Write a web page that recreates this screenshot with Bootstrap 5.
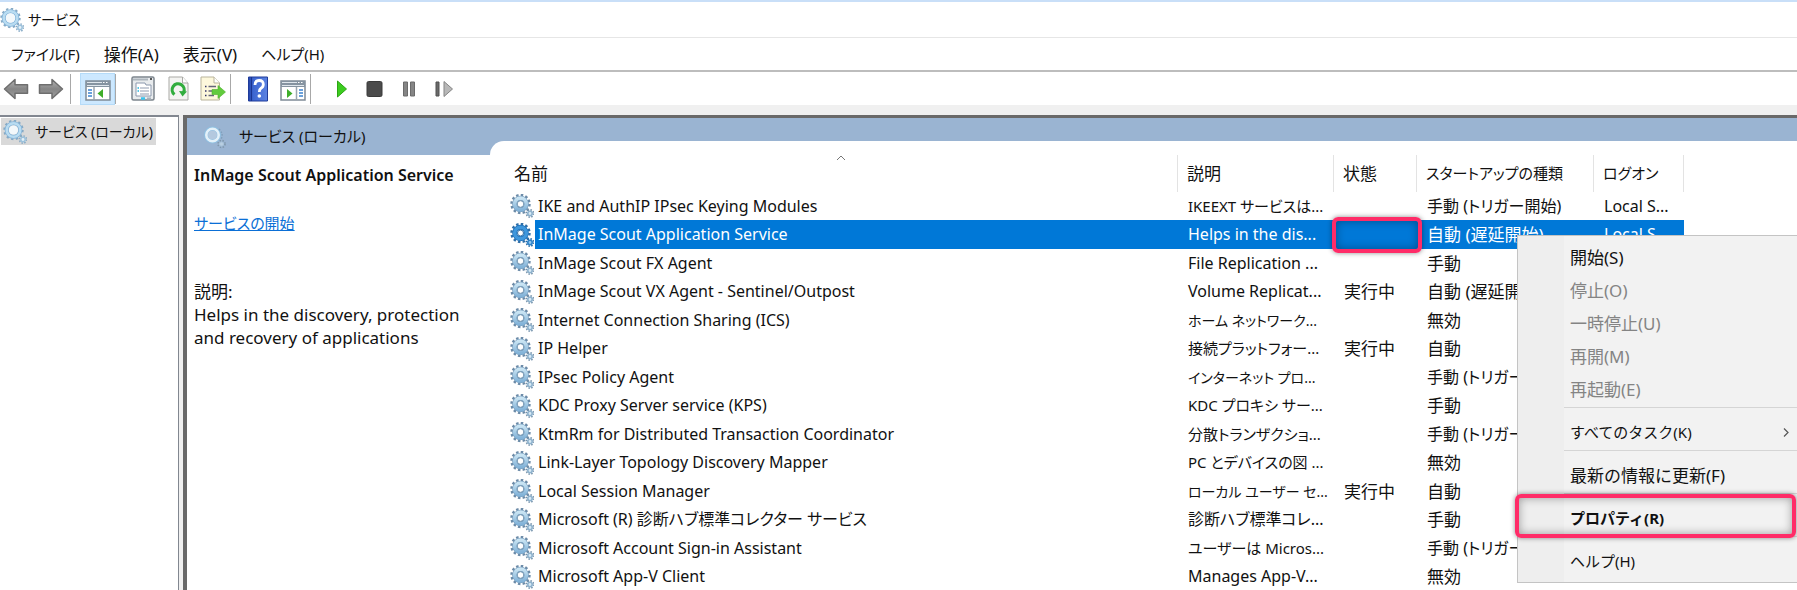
<!DOCTYPE html>
<html lang="ja">
<head>
<meta charset="utf-8">
<meta name="viewport" content="width=device-width, initial-scale=1">
<title>サービス</title>
<link href="https://cdn.jsdelivr.net/npm/bootstrap@5.3.0/dist/css/bootstrap.min.css" rel="stylesheet">
<style>
  body {
    font-family: "Noto Sans", "Noto Sans CJK JP", sans-serif;
    font-size: 16px;
    line-height: 23px;
    color: #111;
    background: #fff;
    font-feature-settings: "palt";
  }
  .ja { font-size: 17px; }
  .kana { font-size: 15px; }
  .kana-sm { font-size: 14px; }
  .titlebar { height: 38px; border-top: 2px solid #c9dff8; border-bottom: 1px solid #e6e6e6; }
  .gear { width: 24px; height: 24px; flex: none; display: block; }
  .menubar { height: 34px; border-bottom: 2px solid #bdbdbd; padding-left: 11px; }
  .menubar a { color: #111; text-decoration: none; }
  .toolbar { height: 33px; }
  .tool { width: 35px; height: 32px; padding: 0; border: 1px solid transparent; background: none; display: flex; align-items: center; justify-content: center; }
  .tool.pressed { background: #cce8ff; border-color: #b5dbf8; }
  .tool svg { width: 30px; height: 28px; display: block; }
  .divider { width: 1px; height: 30px; background: #a8a8a8; margin-right: 9px; }
  .workspace { background: #f0f0f0; padding-top: 10px; min-height: 0; }
  .tree { width: 179px; background: #fff; border-top: 2px solid #828790; border-right: 1px solid #828790; padding: 1px; }
  .tree-node { width: 155px; height: 27px; background: #d9d9d9; color: #111; text-decoration: none; padding-left: 2px; gap: 8px; white-space: nowrap; }
  .console { background: #9ab4d2; border: solid #696969; border-width: 3px 0 0 4px; margin-left: 4px; min-width: 0; }
  .detail { width: 303px; flex: none; }
  .detail-title { height: 37px; padding-left: 15px; gap: 13px; }
  .detail-body { background: #fff; padding: 8px 7px; }
  .detail-body h1 { font-size: 16px; line-height: 24px; font-weight: 600; margin-bottom: 25px; }
  .detail-body .action { margin-bottom: 45px; }
  .detail-body a { color: #0b6fd6; }
  .listing { background: #fff; margin-top: 23px; border-top-left-radius: 14px; padding: 14px 0 0 15px; min-width: 0; overflow: hidden; }
  .services { width: 1179px; table-layout: fixed; border-collapse: separate; border-spacing: 0; }
  .services th { height: 37px; font-weight: 400; padding: 0 0 0 9px; border-right: 1px solid #e3e3e3; position: relative; }
  .services td { height: 28px; padding: 0 0 0 10px; white-space: nowrap; overflow: hidden; line-height: 23px; }
  .services tr:nth-child(even) td { height: 29px; }
  .services td:first-child { padding-left: 5px; }
  .svc { display: flex; align-items: center; gap: 4px; }
  .services .chosen td { background: #0078d7; color: #fff; overflow: visible; position: relative; }
  .services .chosen td:first-child { background: linear-gradient(to right, #fff 30px, #0078d7 30px); }
  .sort { position: absolute; left: 50%; top: 0; width: 10px; height: 6px; margin-left: -5px; }
  .callout { position: absolute; border: 4px solid #ff2c68; border-radius: 6px; pointer-events: none; box-shadow: 0 0 5px rgba(0,0,0,.45), inset 0 0 10px rgba(0,0,0,.35); }
  .callout-status { inset: -3px -5px -4px -2px; z-index: 1; }
  .callout-item { inset: -8px 1px -3px -3px; }
  .context { position: absolute; right: 0; top: 235px; width: 280px; border: 1px solid #c4c4c4; border-right: 0; background: linear-gradient(to right, #eee 46px, #f2f2f2 46px); padding: 5px 0 4px; z-index: 2; }
  .context button { display: block; position: relative; width: 100%; height: 33px; border: 0; background: none; text-align: left; padding: 0 0 0 52px; color: #111; }
  .context button:disabled { color: #848484; }
  .context hr { margin: 1px 0 8px 46px; border: 0; border-top: 1px solid #d5d5d5; opacity: 1; }
  .context .chev { position: absolute; right: 8px; top: 12px; width: 6px; height: 9px; }
</style>
</head>
<body class="vh-100 overflow-hidden d-flex flex-column position-relative">

<svg class="position-absolute" width="0" height="0" aria-hidden="true">
  <defs>
    <linearGradient id="metal" x1="0" y1="0" x2="0" y2="1"><stop offset="0" stop-color="#c9e4f3"/><stop offset="1" stop-color="#83b3d8"/></linearGradient>
    <linearGradient id="arrow" x1="0" y1="0" x2="0" y2="1"><stop offset="0" stop-color="#b4b4b4"/><stop offset=".5" stop-color="#858585"/><stop offset="1" stop-color="#a0a0a0"/></linearGradient>
    <symbol id="gear" viewBox="0 0 24 24">
      <circle cx="10.500" cy="10" r="9" fill="none" stroke="#6c8ba8" stroke-width="2.400" stroke-dasharray="2.500 2.210"/>
      <circle cx="10.500" cy="10" r="5.800" fill="none" stroke="#6f97b9" stroke-width="5"/>
      <circle cx="10.500" cy="10" r="5.800" fill="none" stroke="url(#metal)" stroke-width="3.800"/>
      <circle cx="10.500" cy="10" r="3.300" fill="#fff" stroke="#7195b2" stroke-width="1"/>
      <circle cx="20" cy="19.500" r="3.600" fill="none" stroke="#7592ab" stroke-width="1.800" stroke-dasharray="1.400 1.430"/>
      <circle cx="20" cy="19.500" r="2.200" fill="#d8eaf5" stroke="#8fb3ce" stroke-width="1.600"/>
    </symbol>
    <symbol id="gear-light" viewBox="0 0 24 24">
      <circle cx="10.500" cy="10" r="9.300" fill="none" stroke="#86a9c4" stroke-width="1.800" stroke-dasharray="2.400 2.470"/>
      <circle cx="10.500" cy="10" r="6.800" fill="none" stroke="#7fb0d8" stroke-width="4"/>
      <circle cx="10.500" cy="10" r="6.800" fill="none" stroke="#b9dcf1" stroke-width="2.600"/>
      <circle cx="10.500" cy="10" r="4.600" fill="#f3f8fb"/>
      <circle cx="20" cy="19.500" r="3.600" fill="none" stroke="#86a9c4" stroke-width="1.600" stroke-dasharray="1.400 1.430"/>
      <circle cx="20" cy="19.500" r="2.200" fill="#e6f1f8" stroke="#9cc2dd" stroke-width="1.500"/>
    </symbol>
    <symbol id="gear-ghost" viewBox="0 0 24 24">
      <circle cx="10.500" cy="10" r="6.500" fill="#b4c9df" stroke="#8fc0e2" stroke-width="4"/>
      <circle cx="10.500" cy="10" r="6.200" fill="none" stroke="#e4f1f9" stroke-width="2.600"/>
      <path d="M17 4q5 5 2 10" fill="none" stroke="#7f9fbb" stroke-width="1.500" stroke-dasharray="1.500 1.500"/>
      <circle cx="19.500" cy="19" r="3.500" fill="none" stroke="#7f97ab" stroke-width="1.600" stroke-dasharray="1.400 1.430"/>
      <circle cx="19.500" cy="19" r="2" fill="#b9cfe2" stroke="#a9c3d9" stroke-width="1"/>
    </symbol>
    <symbol id="gear-chosen" viewBox="0 0 24 24">
      <circle cx="10.500" cy="10" r="9" fill="none" stroke="#2f6fa8" stroke-width="2.400" stroke-dasharray="2.500 2.210"/>
      <circle cx="10.500" cy="10" r="5.800" fill="none" stroke="#1a6fba" stroke-width="5"/>
      <circle cx="10.500" cy="10" r="5.800" fill="none" stroke="#3f97dc" stroke-width="3.600"/>
      <circle cx="10.500" cy="10" r="3" fill="#fff" stroke="#2a6ba5" stroke-width="1"/>
      <circle cx="20" cy="19.500" r="3.600" fill="none" stroke="#2368a5" stroke-width="1.800" stroke-dasharray="1.400 1.430"/>
      <circle cx="20" cy="19.500" r="2.200" fill="#8fc6ef" stroke="#2f84c9" stroke-width="1.600"/>
    </symbol>
  </defs>
</svg>

<header class="titlebar d-flex align-items-center flex-shrink-0 kana-sm">
  <svg class="gear" aria-hidden="true"><use href="#gear-light"/></svg>
  <span class="ms-1">サービス</span>
</header>

<nav class="menubar d-flex align-items-center flex-shrink-0 gap-4 ja">
  <a href="#" class="kana">ファイル(F)</a>
  <a href="#">操作(A)</a>
  <a href="#">表示(V)</a>
  <a href="#" class="kana">ヘルプ(H)</a>
</nav>

<div class="toolbar d-flex align-items-center flex-shrink-0">
  <button class="tool" aria-label="戻る"><svg viewBox="0 0 30 28"><path d="M1.500 14 12 4.500v5.300h12.500v8.400H12v5.300z" fill="url(#arrow)" stroke="#6e6e6e" stroke-width="1.500" stroke-linejoin="round"/></svg></button>
  <button class="tool" aria-label="進む"><svg viewBox="0 0 30 28"><path d="M24.500 14 14 4.500v5.300H1.500v8.400H14v5.300z" fill="url(#arrow)" stroke="#6e6e6e" stroke-width="1.500" stroke-linejoin="round"/></svg></button>
  <span class="divider"></span>
  <button class="tool pressed" aria-label="コンソール ツリー"><svg viewBox="0 0 30 28"><path d="M3 6h24v19H3z" fill="#fff" stroke="#7f8b96" stroke-width="1.500"/><path d="M3 6h24v6H3z" fill="#8593a0"/><path d="M4 7.500h15M4 10.500h22" stroke="#dfe6ec"/><path d="M20 7.500h1.500M23 7.500h1.500" stroke="#fff"/><path d="M11 12v13" stroke="#9aa5af" stroke-width="1.500"/><path d="M5 15h4M5 18h4M5 21h4" stroke="#3a82cf" stroke-width="1.500"/><path d="m20 14-5.500 4.500L20 23z" fill="#3fae2a"/></svg></button>
  <span class="divider"></span>
  <button class="tool" aria-label="プロパティ"><svg viewBox="0 0 30 28"><rect x="4" y="2" width="22" height="23" rx="1.500" fill="#e8ebed" stroke="#7c858d" stroke-width="1.500"/><path d="M5 4.500h15" stroke="#adb5bc" stroke-width="2"/><path d="M22 4h2" stroke="#555" stroke-width="2"/><path d="M8 8h9l1 2h5v11H8z" fill="#fff" stroke="#8b98ad"/><path d="M12 13h9M12 16h9M12 19h9" stroke="#8f9bb0" stroke-width="1.200"/><path d="M9.500 13h1.500M9.500 16h1.500" stroke="#25b4dc" stroke-width="1.500"/><path d="M13 23.500h4" stroke="#38c3ee" stroke-width="2.500"/><path d="M19 23.500h4" stroke="#a9b2ba" stroke-width="2"/></svg></button>
  <button class="tool" aria-label="最新の情報に更新"><svg viewBox="0 0 30 28"><path d="M6 2h13.500L25 8v17H6z" fill="#f4f4f2" stroke="#a9a9a5"/><path d="M19.500 2v6H25" fill="#fff" stroke="#a9a9a5"/><path d="M11.500 19.500a6 6 0 1 1 9-2" fill="none" stroke="#31ad3e" stroke-width="3.200"/><path d="m16 16 8 .500-4.500 5z" fill="#31ad3e"/></svg></button>
  <button class="tool" aria-label="一覧のエクスポート"><svg viewBox="0 0 30 28"><path d="M3 2h13l5.500 6v17H3z" fill="#fdf8dc" stroke="#b9b49c"/><path d="M16 2v6h5.500" fill="#fff" stroke="#b9b49c"/><path d="M7 11.500h1.500M7 16h1.500M7 20.500h1.500" stroke="#34346a" stroke-width="1.600"/><path d="M10.500 11.500H18M10.500 16H15M10.500 20.500H16" stroke="#66667a" stroke-width="1.300"/><path d="M14 14.500h6v-4l7.500 6.500-7.500 6.500v-4h-6z" fill="#62cb3d" stroke="#4bb02b" stroke-width=".600"/></svg></button>
  <span class="divider"></span>
  <button class="tool" aria-label="ヘルプ"><svg viewBox="0 0 30 28"><defs><linearGradient id="book" x1="0" x2="1"><stop offset="0" stop-color="#2242a8"/><stop offset=".25" stop-color="#3d66d0"/><stop offset="1" stop-color="#5b82e2"/></linearGradient></defs><path d="M5.500 2h19v24h-19z" fill="url(#book)" stroke="#203c9a"/><path d="M8.500 2v24" stroke="#1b3590"/><path d="M12 10q0-4.500 4.200-4.500T20.300 9.500q0 2.500-2.300 3.800-1.700 1-1.700 3.700" fill="none" stroke="#fff" stroke-width="2.800"/><circle cx="16.300" cy="21" r="1.800" fill="#fff"/></svg></button>
  <button class="tool" aria-label="操作ウィンドウ"><svg viewBox="0 0 30 28"><path d="M3 6h24v19H3z" fill="#fff" stroke="#7f8b96" stroke-width="1.500"/><path d="M3 6h24v6H3z" fill="#8593a0"/><path d="M4 7.500h15M4 10.500h22" stroke="#dfe6ec"/><path d="M20 7.500h1.500M23 7.500h1.500" stroke="#fff"/><path d="M18.500 12v13" stroke="#9aa5af" stroke-width="1.500"/><path d="M21 15h4M21 18h4M21 21h4" stroke="#3a82cf" stroke-width="1.500"/><path d="m9 14 5.500 4.500L9 23z" fill="#3fae2a"/></svg></button>
  <span class="divider"></span>
  <button class="tool ms-1" aria-label="開始"><svg viewBox="0 0 30 28"><path d="M10.500 6v16l9-8z" fill="#3ccc1f" stroke="#2ca514" stroke-linejoin="round"/></svg></button>
  <button class="tool" aria-label="停止"><svg viewBox="0 0 30 28"><rect x="5" y="6.500" width="15" height="15" rx="1.500" fill="#4b4b4b" stroke="#3a3a3a"/></svg></button>
  <button class="tool" aria-label="一時停止"><svg viewBox="0 0 30 28"><path d="M6.500 7h4v14h-4zM13.500 7h4v14h-4z" fill="#858585" stroke="#6b6b6b"/></svg></button>
  <button class="tool" aria-label="再起動"><svg viewBox="0 0 30 28"><path d="M4 7h3v14H4z" fill="#6a6a6a" stroke="#505050"/><path d="M12 6.500v15l8.500-7.500z" fill="#b8b8b8" stroke="#858585" stroke-linejoin="round"/></svg></button>
</div>

<main class="workspace d-flex flex-grow-1">
  <nav class="tree flex-shrink-0 kana-sm">
    <a href="#" class="tree-node d-flex align-items-center"><svg class="gear" aria-hidden="true"><use href="#gear-light"/></svg>サービス (ローカル)</a>
  </nav>

  <section class="console d-flex flex-grow-1">
    <div class="detail d-flex flex-column">
      <div class="detail-title d-flex align-items-center kana"><svg class="gear" aria-hidden="true"><use href="#gear-ghost"/></svg>サービス (ローカル)</div>
      <div class="detail-body flex-grow-1 ja">
        <h1>InMage Scout Application Service</h1>
        <p class="action kana"><a href="#">サービスの開始</a></p>
        <p class="mb-0">説明:</p>
        <p class="mb-0">Helps in the discovery, protection<br>and recovery of applications</p>
      </div>
    </div>

    <div class="listing flex-grow-1">
      <table class="services">
        <colgroup><col style="width:673px"><col style="width:156px"><col style="width:83px"><col style="width:177px"><col style="width:90px"></colgroup>
        <thead class="ja">
          <tr><th>名前<svg class="sort" viewBox="0 0 10 6" aria-hidden="true"><path d="m1 5 4-4 4 4" fill="none" stroke="#777"/></svg></th><th>説明</th><th>状態</th><th class="kana">スタートアップの種類</th><th class="kana">ログオン</th></tr>
        </thead>
        <tbody>
          <tr><td><span class="svc"><svg class="gear"><use href="#gear"/></svg>IKE and AuthIP IPsec Keying Modules</span></td><td class="kana">IKEEXT サービスは...</td><td></td><td>手動 (トリガー開始)</td><td>Local S...</td></tr>
          <tr class="chosen"><td><span class="svc"><svg class="gear"><use href="#gear-chosen"/></svg>InMage Scout Application Service</span></td><td>Helps in the dis...</td><td><span class="callout callout-status"></span></td><td class="ja">自動 (遅延開始)</td><td>Local S...</td></tr>
          <tr><td><span class="svc"><svg class="gear"><use href="#gear"/></svg>InMage Scout FX Agent</span></td><td>File Replication ...</td><td></td><td class="ja">手動</td><td></td></tr>
          <tr><td><span class="svc"><svg class="gear"><use href="#gear"/></svg>InMage Scout VX Agent - Sentinel/Outpost</span></td><td>Volume Replicat...</td><td class="ja">実行中</td><td class="ja">自動 (遅延開始)</td><td></td></tr>
          <tr><td><span class="svc"><svg class="gear"><use href="#gear"/></svg>Internet Connection Sharing (ICS)</span></td><td class="kana-sm">ホーム ネットワーク...</td><td></td><td class="ja">無効</td><td></td></tr>
          <tr><td><span class="svc"><svg class="gear"><use href="#gear"/></svg>IP Helper</span></td><td class="kana">接続プラットフォー...</td><td class="ja">実行中</td><td class="ja">自動</td><td></td></tr>
          <tr><td><span class="svc"><svg class="gear"><use href="#gear"/></svg>IPsec Policy Agent</span></td><td class="kana-sm">インターネット プロ...</td><td></td><td>手動 (トリガー開始)</td><td></td></tr>
          <tr><td><span class="svc"><svg class="gear"><use href="#gear"/></svg>KDC Proxy Server service (KPS)</span></td><td class="kana">KDC プロキシ サー...</td><td></td><td class="ja">手動</td><td></td></tr>
          <tr><td><span class="svc"><svg class="gear"><use href="#gear"/></svg>KtmRm for Distributed Transaction Coordinator</span></td><td class="kana">分散トランザクショ...</td><td></td><td>手動 (トリガー開始)</td><td></td></tr>
          <tr><td><span class="svc"><svg class="gear"><use href="#gear"/></svg>Link-Layer Topology Discovery Mapper</span></td><td class="kana">PC とデバイスの図 ...</td><td></td><td class="ja">無効</td><td></td></tr>
          <tr><td><span class="svc"><svg class="gear"><use href="#gear"/></svg>Local Session Manager</span></td><td class="kana-sm">ローカル ユーザー セ...</td><td class="ja">実行中</td><td class="ja">自動</td><td></td></tr>
          <tr><td><span class="svc"><svg class="gear"><use href="#gear"/></svg>Microsoft (R) 診断ハブ標準コレクター サービス</span></td><td>診断ハブ標準コレ...</td><td></td><td class="ja">手動</td><td></td></tr>
          <tr><td><span class="svc"><svg class="gear"><use href="#gear"/></svg>Microsoft Account Sign-in Assistant</span></td><td class="kana">ユーザーは Micros...</td><td></td><td>手動 (トリガー開始)</td><td></td></tr>
          <tr><td><span class="svc"><svg class="gear"><use href="#gear"/></svg>Microsoft App-V Client</span></td><td>Manages App-V...</td><td></td><td class="ja">無効</td><td></td></tr>
        </tbody>
      </table>
    </div>
  </section>
</main>

<div class="context ja" role="menu">
  <button role="menuitem">開始(S)</button>
  <button role="menuitem" disabled>停止(O)</button>
  <button role="menuitem" disabled>一時停止(U)</button>
  <button role="menuitem" disabled>再開(M)</button>
  <button role="menuitem" disabled>再起動(E)</button>
  <hr>
  <button role="menuitem" class="kana">すべてのタスク(K)<svg class="chev" viewBox="0 0 6 9" aria-hidden="true"><path d="m1 .500 4 4-4 4" fill="none" stroke="#555" stroke-width="1.200"/></svg></button>
  <hr>
  <button role="menuitem">最新の情報に更新(F)</button>
  <hr>
  <button role="menuitem" class="kana fw-bold">プロパティ(R)<span class="callout callout-item"></span></button>
  <hr>
  <button role="menuitem" class="kana">ヘルプ(H)</button>
</div>

<script src="https://cdn.jsdelivr.net/npm/bootstrap@5.3.0/dist/js/bootstrap.bundle.min.js"></script>
</body>
</html>
